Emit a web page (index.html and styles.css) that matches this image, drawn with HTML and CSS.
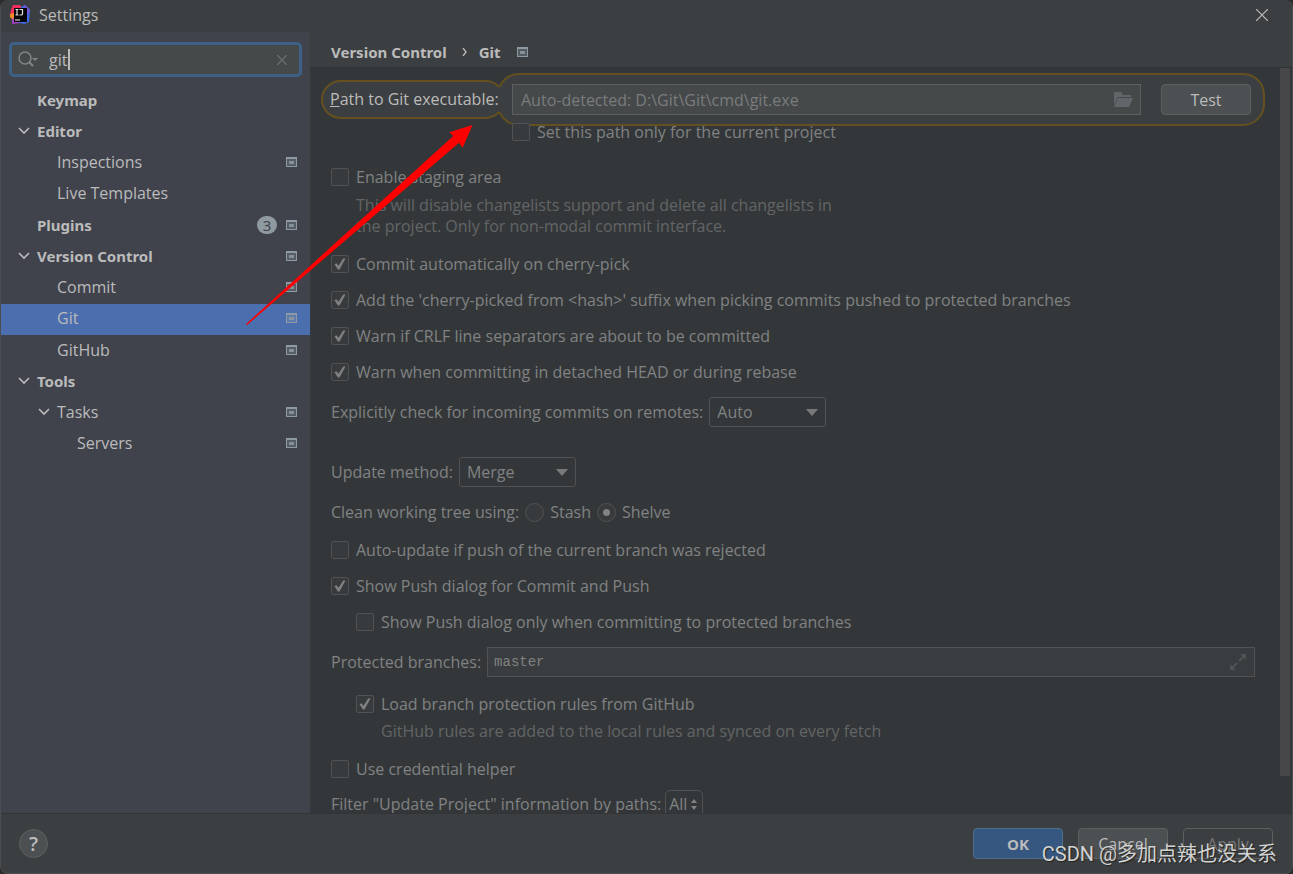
FILE: index.html
```
<!DOCTYPE html>
<html lang="en">
<head>
<meta charset="utf-8">
<title>Settings</title>
<link rel="stylesheet" href="styles.css">
</head>
<body>
<svg class="defs" aria-hidden="true">
  <symbol id="project" viewBox="0 0 11 10"><path fill-rule="evenodd" d="M0 0H11V10H0ZM1 2V9H10V2Z"/><path d="M3 4H8V7H3Z" opacity=".85"/><path d="M1 2H10V9H1Z" opacity=".3"/></symbol>
  <symbol id="chevron" viewBox="0 0 12 8"><path d="M1 1L6 6L11 1" fill="none" stroke="currentColor" stroke-width="1.6"/></symbol>
  <symbol id="arrow" viewBox="0 0 12 7"><path d="M0 0H12L6 7Z"/></symbol>
</svg>
<div class="window">
  <header class="titlebar">
    <svg class="logo" viewBox="0 0 20 20" aria-hidden="true">
      <path d="M1 5L3 0H10L13 5L5 14L0 10Z" fill="#f52d5c"/>
      <path d="M0 9L4 8V16L0 12Z" fill="#f58a25"/>
      <path d="M2 14L7 12L11 18L2 19Z" fill="#a33fc0"/>
      <path d="M11 2L15 0L20 5L19 17L14 19L7 17Z" fill="#3e6be8"/>
      <path d="M15 0L20 5L18 10L13 4Z" fill="#7655dc"/>
      <rect x="4" y="3" width="13" height="14" fill="#050507"/>
      <path d="M5.500 4.500H8.500M7 4.500V10M5.500 10H8.500M9.500 4.500H13M12.500 4.500V9Q12.500 10 11 10H9.500" stroke="#e2e2e2" stroke-width="1.200" fill="none"/>
      <path d="M5 15H10" stroke="#aaa" stroke-width="1.3"/>
    </svg>
    <h1 class="title">Settings</h1>
    <button class="close" type="button" aria-label="Close"><svg viewBox="0 0 12 12"><path d="M0 0L12 12M12 0L0 12" stroke="currentColor" stroke-width="1.2"/></svg></button>
  </header>

  <div class="body">
    <aside class="sidebar">
      <div class="search">
        <svg class="search-icon" viewBox="0 0 21 17" aria-hidden="true"><circle cx="7" cy="7" r="6" fill="none" stroke="currentColor" stroke-width="1.5"/><path d="M11 11L15 15" stroke="currentColor" stroke-width="2"/><path d="M14 7H20L17 10Z" fill="currentColor"/></svg>
        <span class="query"><input type="text" value="git" aria-label="Search settings"><i class="caret"></i></span>
        <button class="clear" type="button" aria-label="Clear"><svg viewBox="0 0 10 10"><path d="M0 0L10 10M10 0L0 10" stroke="currentColor" stroke-width="1.2"/></svg></button>
      </div>
      <ul class="tree">
        <li class="group">Keymap</li>
        <li class="group"><svg class="chev"><use href="#chevron"/></svg>Editor</li>
        <li class="leaf">Inspections<svg class="proj"><use href="#project"/></svg></li>
        <li class="leaf">Live Templates</li>
        <li class="group">Plugins<span class="badge">3</span><svg class="proj"><use href="#project"/></svg></li>
        <li class="group"><svg class="chev"><use href="#chevron"/></svg>Version Control<svg class="proj"><use href="#project"/></svg></li>
        <li class="leaf">Commit<svg class="proj"><use href="#project"/></svg></li>
        <li class="leaf selected">Git<svg class="proj"><use href="#project"/></svg></li>
        <li class="leaf">GitHub<svg class="proj"><use href="#project"/></svg></li>
        <li class="group"><svg class="chev"><use href="#chevron"/></svg>Tools</li>
        <li class="leaf"><svg class="chev"><use href="#chevron"/></svg>Tasks<svg class="proj"><use href="#project"/></svg></li>
        <li class="deep">Servers<svg class="proj"><use href="#project"/></svg></li>
      </ul>
    </aside>

    <main class="main">
      <h2 class="crumbs"><span>Version Control</span><svg class="sep" viewBox="0 0 5 8"><path d="M1 0L4 4L1 8" fill="none" stroke="currentColor" stroke-width="1.3"/></svg><span>Git</span><svg class="proj"><use href="#project"/></svg></h2>
      <div class="pane">
        <form class="form">
          <div class="spot">
            <label class="spot-label" for="path"><span><u>P</u>ath to Git executable:</span></label>
            <div class="spot-field">
              <div class="path"><input id="path" type="text" placeholder="Auto-detected: D:\Git\Git\cmd\git.exe">
                <svg class="folder" viewBox="0 0 19 15" aria-hidden="true"><path d="M0 0H7L9 3H17V5H4L0 13Z"/><path d="M4 6H19L15 15H0Z"/></svg></div>
              <button class="btn" type="button">Test</button>
            </div>
          </div>
          <label class="only"><input type="checkbox">Set this path only for the current project</label>

          <label class="check"><input type="checkbox">Enable staging area</label>
          <p class="hint">This will disable changelists support and delete all changelists in<br>the project. Only for non-modal commit interface.</p>
          <label class="check"><input type="checkbox" checked>Commit automatically on cherry-pick</label>
          <label class="check"><input type="checkbox" checked>Add the 'cherry-picked from &lt;hash&gt;' suffix when picking commits pushed to protected branches</label>
          <label class="check"><input type="checkbox" checked>Warn if CRLF line separators are about to be committed</label>
          <label class="check"><input type="checkbox" checked>Warn when committing in detached HEAD or during rebase</label>
          <div class="line"><label for="incoming">Explicitly check for incoming commits on remotes:</label><span class="combo"><select id="incoming"><option>Auto</option></select><svg><use href="#arrow"/></svg></span></div>
          <div class="line update"><label for="method">Update method:</label><span class="combo"><select id="method"><option>Merge</option></select><svg><use href="#arrow"/></svg></span></div>
          <div class="radios"><span>Clean working tree using:</span><label><input type="radio" name="clean">Stash</label><label><input type="radio" name="clean" checked>Shelve</label></div>
          <label class="check spaced"><input type="checkbox">Auto-update if push of the current branch was rejected</label>
          <label class="check"><input type="checkbox" checked>Show Push dialog for Commit and Push</label>
          <label class="check nested"><input type="checkbox">Show Push dialog only when committing to protected branches</label>
          <div class="line"><label for="branches">Protected branches:</label><span class="branches"><input id="branches" type="text" value="master"><svg viewBox="0 0 16 16" aria-hidden="true"><path d="M10 0H16V6Z M0 10V16H6Z"/><path d="M14 2L9 7M2 14L7 9" stroke="currentColor" stroke-width="2"/></svg></span></div>
          <label class="check nested spaced"><input type="checkbox" checked>Load branch protection rules from GitHub</label>
          <p class="hint rules">GitHub rules are added to the local rules and synced on every fetch</p>
          <label class="check"><input type="checkbox">Use credential helper</label>
          <div class="filter"><span>Filter "Update Project" information by paths:</span><button type="button">All<svg viewBox="0 0 8 11"><path d="M1 4L4 0L7 4ZM1 7L4 11L7 7Z"/></svg></button></div>
        </form>
        <div class="scroll"><div class="thumb"></div></div>
      </div>
    </main>
  </div>

  <footer class="footer">
    <button class="help" type="button">?</button>
    <div class="actions">
      <button class="btn primary" type="button">OK</button>
      <button class="btn" type="button">Cancel</button>
      <button class="btn off" type="button">Apply</button>
    </div>
  </footer>
  <div class="mark">CSDN @多加点辣也没关系</div>
  <svg class="pointer" viewBox="0 0 240 210" aria-hidden="true"><path d="M6 204L213.300 16L209.300 12.300L232.500 5L222.700 27.700L219 22.700L7 205Z"/></svg>
</div>
</body>
</html>
```
FILE: styles.css
```
* { box-sizing: border-box; }

body {
  margin: 0;
  background: #2b2b2b;
  color: #bbbbbb;
  font: 16px/20px "Open Sans", "Noto Sans CJK SC", sans-serif;
}

button, input, select { font: inherit; color: inherit; margin: 0; }
button { padding: 0; border: 0; background: none; }
input, select { outline: 0; }
svg { fill: currentColor; flex: none; display: block; }
.defs { position: absolute; width: 0; height: 0; }

.window {
  position: relative;
  display: flex;
  flex-direction: column;
  height: 100vh;
  border: 1px solid #4b4e50;
  border-top: 0;
  border-radius: 8px;
  overflow: hidden;
  background: #3c3f41;
}

.titlebar { display: flex; align-items: center; height: 32px; padding: 0 24px 2px 9px; }
.logo { width: 20px; height: 20px; }
.title { flex: 1; margin: 0 0 0 9px; font-size: 16px; font-weight: 400; }
.close svg { width: 12px; height: 12px; }

.body { flex: 1; display: flex; min-height: 0; }

.sidebar { width: 309px; flex: none; background: #40434c; padding-top: 10px; }
.search {
  display: flex;
  align-items: center;
  height: 35px;
  margin: 0 8px;
  padding: 0 12px 0 6px;
  border: 3px solid #3d6185;
  border-radius: 5px;
  background: #45494a;
}
.search-icon { width: 21px; height: 17px; color: #7f8689; }
.query { position: relative; flex: 1; margin-left: 10px; }
.query input { display: block; width: 100%; height: 22px; padding: 0; border: 0; background: none; }
.caret { position: absolute; left: 19px; top: 0; width: 2px; height: 21px; background: #bbbbbb; }
.clear { color: #6f7476; }
.clear svg { width: 10px; height: 10px; }

.tree {
  display: grid;
  grid-template-rows: repeat(12, 1fr);
  height: 375px;
  margin: 8px 0 0;
  padding: 0;
  list-style: none;
}
.tree li { display: flex; align-items: center; padding: 0 13px 2px 0; }
.tree .group { padding-left: 36px; font-family: "Noto Sans", sans-serif; font-size: 15px; font-weight: 700; }
.tree .leaf { padding-left: 56px; }
.tree .deep { padding-left: 76px; }
.tree .selected { background: #4b6eaf; }
.chev { width: 12px; height: 8px; margin: 0 7px 0 -19px; }
.proj { width: 11px; height: 10px; color: #8e9aa3; }
.tree .proj { margin-left: auto; }
.badge {
  width: 20px;
  height: 18px;
  margin: 0 9px 0 auto;
  border-radius: 10px;
  background: #8e9aa0;
  color: #40434c;
  font-weight: 400;
  line-height: 18px;
  text-align: center;
}
.tree .badge + .proj { margin-left: 0; }

.main { flex: 1; min-width: 0; display: flex; flex-direction: column; }
.crumbs { display: flex; align-items: center; height: 35px; margin: 0; padding: 5px 21px 0; font-family: "Noto Sans", sans-serif; font-size: 15px; }
.crumbs .sep { width: 5px; height: 8px; margin: 0 12px 0 15px; }
.crumbs .proj { margin-left: 16px; }

.pane {
  flex: 1;
  display: flex;
  min-height: 0;
  border-top: 1px solid #313436;
  border-left: 1px solid #36393b;
  background: #343739;
  overflow: hidden;
}
.form { flex: 1; min-width: 0; padding: 5px 15px 0 20px; color: #808283; }
.scroll { width: 12px; }
.thumb { width: 10px; height: 95%; background: #47474a; }

.spot { display: flex; align-items: center; margin-left: -10px; color: #bbbbbb; }
.spot-label {
  height: 39px;
  padding: 7px 0 0 7px;
  width: 184px;
  border: 2px solid #65501f;
  border-radius: 20px;
  background: #3c3f41;
  white-space: nowrap;
}
.spot-label span { position: relative; z-index: 2; }
.spot-field {
  position: relative;
  flex: 1;
  display: flex;
  align-items: center;
  gap: 20px;
  height: 53px;
  margin-left: -8px;
  padding: 0 12px 0 13px;
  border: 2px solid #65501f;
  border-radius: 22px;
  background: #3c3f41;
}
.spot-field::before {
  content: "";
  position: absolute;
  left: -4px;
  top: 12px;
  width: 10px;
  height: 25px;
  background: #3c3f41;
}
.path {
  flex: 1;
  display: flex;
  align-items: center;
  height: 31px;
  padding: 0 7px 0 8px;
  border: 1px solid #5e6060;
  background: #45494a;
}
.path input { flex: 1; min-width: 0; padding: 0; border: 0; background: none; }
.path input::placeholder { color: #7a7c7d; opacity: 1; }
.folder { width: 19px; height: 15px; color: #606669; }

.btn {
  width: 90px;
  height: 31px;
  border: 1px solid #5e6060;
  border-radius: 4px;
  background: #4c5052;
  text-align: center;
}

.only { position: relative; display: flex; align-items: center; gap: 7px; height: 22px; margin: -5px 0 16px 181px; }
.check { display: flex; align-items: center; gap: 7px; height: 36px; white-space: nowrap; }
.nested { margin-left: 25px; }
.spaced { margin-top: 2px; }

input[type="checkbox"], input[type="radio"] {
  appearance: none;
  position: relative;
  flex: none;
  width: 18px;
  height: 18px;
  border: 1px solid #505253;
  border-radius: 2px;
  background: #383b3d;
}
input[type="checkbox"]:checked::before {
  content: "";
  position: absolute;
  inset: 2px;
  background: #7e8081;
  clip-path: polygon(4% 52%, 20% 44%, 38% 64%, 76% 4%, 96% 4%, 46% 96%, 32% 96%);
}
input[type="radio"] { width: 19px; height: 19px; border-radius: 50%; }
input[type="radio"]:checked::before {
  content: "";
  position: absolute;
  inset: 5px;
  border-radius: 50%;
  background: #808283;
}

.hint { margin: 0 0 9px 25px; line-height: 21px; color: #626566; }
.rules { margin: -1px 0 9px 50px; }

.line { display: flex; align-items: center; gap: 6px; height: 44px; }
.update { margin-top: 16px; }
.combo { position: relative; width: 117px; }
.combo select {
  appearance: none;
  display: block;
  width: 100%;
  height: 30px;
  padding: 0 7px;
  border: 1px solid #505253;
  border-radius: 3px;
  background: #343739;
}
.combo svg { position: absolute; right: 8px; top: 12px; width: 12px; height: 7px; color: #77797a; pointer-events: none; }
.radios, .radios label { display: flex; align-items: center; gap: 6px; height: 36px; }

.branches {
  flex: 1;
  display: flex;
  align-items: center;
  height: 30px;
  margin-right: 10px;
  padding: 0 8px 0 6px;
  border: 1px solid #505253;
  background: #3a3d3f;
}
.branches input { flex: 1; padding: 0; border: 0; background: none; font: 14px "Liberation Mono", monospace; }
.branches svg { width: 16px; height: 16px; color: #4e5254; }

.filter { display: flex; align-items: center; gap: 4px; height: 34px; }
.filter button {
  display: flex;
  align-items: center;
  gap: 3px;
  height: 28px;
  padding: 0 4px 0 3px;
  border: 1px solid #505253;
  border-radius: 5px;
}
.filter svg { width: 8px; height: 11px; }

.footer {
  display: flex;
  align-items: center;
  justify-content: space-between;
  height: 60px;
  padding: 0 19px 0 18px;
  border-top: 1px solid #323537;
}
.help {
  width: 29px;
  height: 29px;
  border: 1px solid #5e6060;
  border-radius: 50%;
  background: #4c5052;
  font-size: 20px;
  font-weight: 600;
}
.actions { display: flex; gap: 15px; }
.primary { background: #365880; border-color: #4c708c; font-size: 15px; font-weight: 700; }
.off { background: none; color: #777777; }

.mark {
  position: absolute;
  right: 15px;
  bottom: 5px;
  color: #d2d3d3;
  font: 20px/28px Roboto, "Noto Sans CJK SC", sans-serif;
  text-shadow: 1px 1px 1px #222222;
}
.pointer { position: absolute; left: 239px; top: 120px; width: 240px; height: 210px; color: #ff0000; }
```
